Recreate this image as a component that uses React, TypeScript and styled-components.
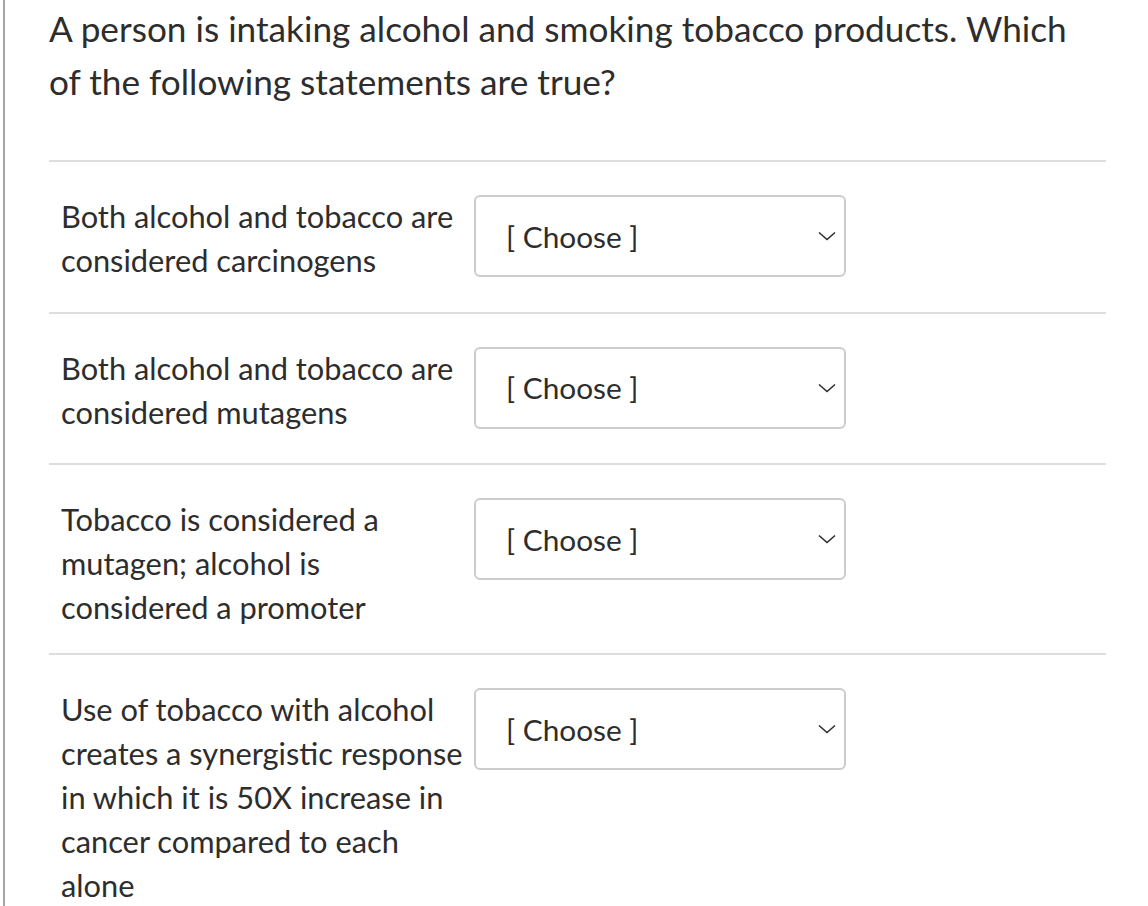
import React from "react";
import styled, { createGlobalStyle } from "styled-components";

const GlobalStyle = createGlobalStyle`
  html, body { margin: 0; padding: 0; background: #ffffff; }
  body { font-family: Lato, "Noto Sans", sans-serif; color: #2d2d2d; }
`;

const Page = styled.div`
  margin-left: 3px;
  border-left: 2px solid #a5a5a5;
  min-height: 906px;
  padding: 0 42px 0 44px;
  box-sizing: border-box;
`;

const Question = styled.div`
  font-size: 35.2px;
  line-height: 53px;
  padding-top: 2px;
  padding-bottom: 52px;
  width: 1040px;
`;

const List = styled.div`
  display: flex;
  flex-direction: column;
`;

const Row = styled.div`
  display: flex;
  align-items: flex-start;
  gap: 10px;
  border-top: 2px solid #dddddd;
  padding: 33px 0 23px 12px;
`;

const Label = styled.div`
  width: 403px;
  flex: none;
  font-size: 30.8px;
  line-height: 44px;
`;

const Select = styled.div`
  width: 372px;
  height: 82px;
  box-sizing: border-box;
  border: 2px solid #cccccc;
  border-radius: 6px;
  display: flex;
  align-items: center;
  justify-content: space-between;
  padding: 0 8px 0 30px;
  margin-bottom: 11.5px;
  font-size: 29.8px;
  background: #fff;
`;

const Chevron = () => (
  <svg width="18" height="10" viewBox="0 0 18 10" fill="none">
    <path d="M1 1.5 L9 8.5 L17 1.5" stroke="#2d2d2d" strokeWidth="1.6" />
  </svg>
);

const items = [
  "Both alcohol and tobacco are considered carcinogens",
  "Both alcohol and tobacco are considered mutagens",
  "Tobacco is considered a mutagen; alcohol is considered a promoter",
  "Use of tobacco with alcohol creates a synergistic response in which it is 50X increase in cancer compared to each alone",
];

export default function App() {
  return (
    <>
      <GlobalStyle />
      <Page>
        <Question>
          A person is intaking alcohol and smoking tobacco products. Which of the following statements are true?
        </Question>
        <List>
          {items.map((t) => (
            <Row key={t}>
              <Label>{t}</Label>
              <Select>
                <span>[ Choose ]</span>
                <Chevron />
              </Select>
            </Row>
          ))}
        </List>
      </Page>
    </>
  );
}
